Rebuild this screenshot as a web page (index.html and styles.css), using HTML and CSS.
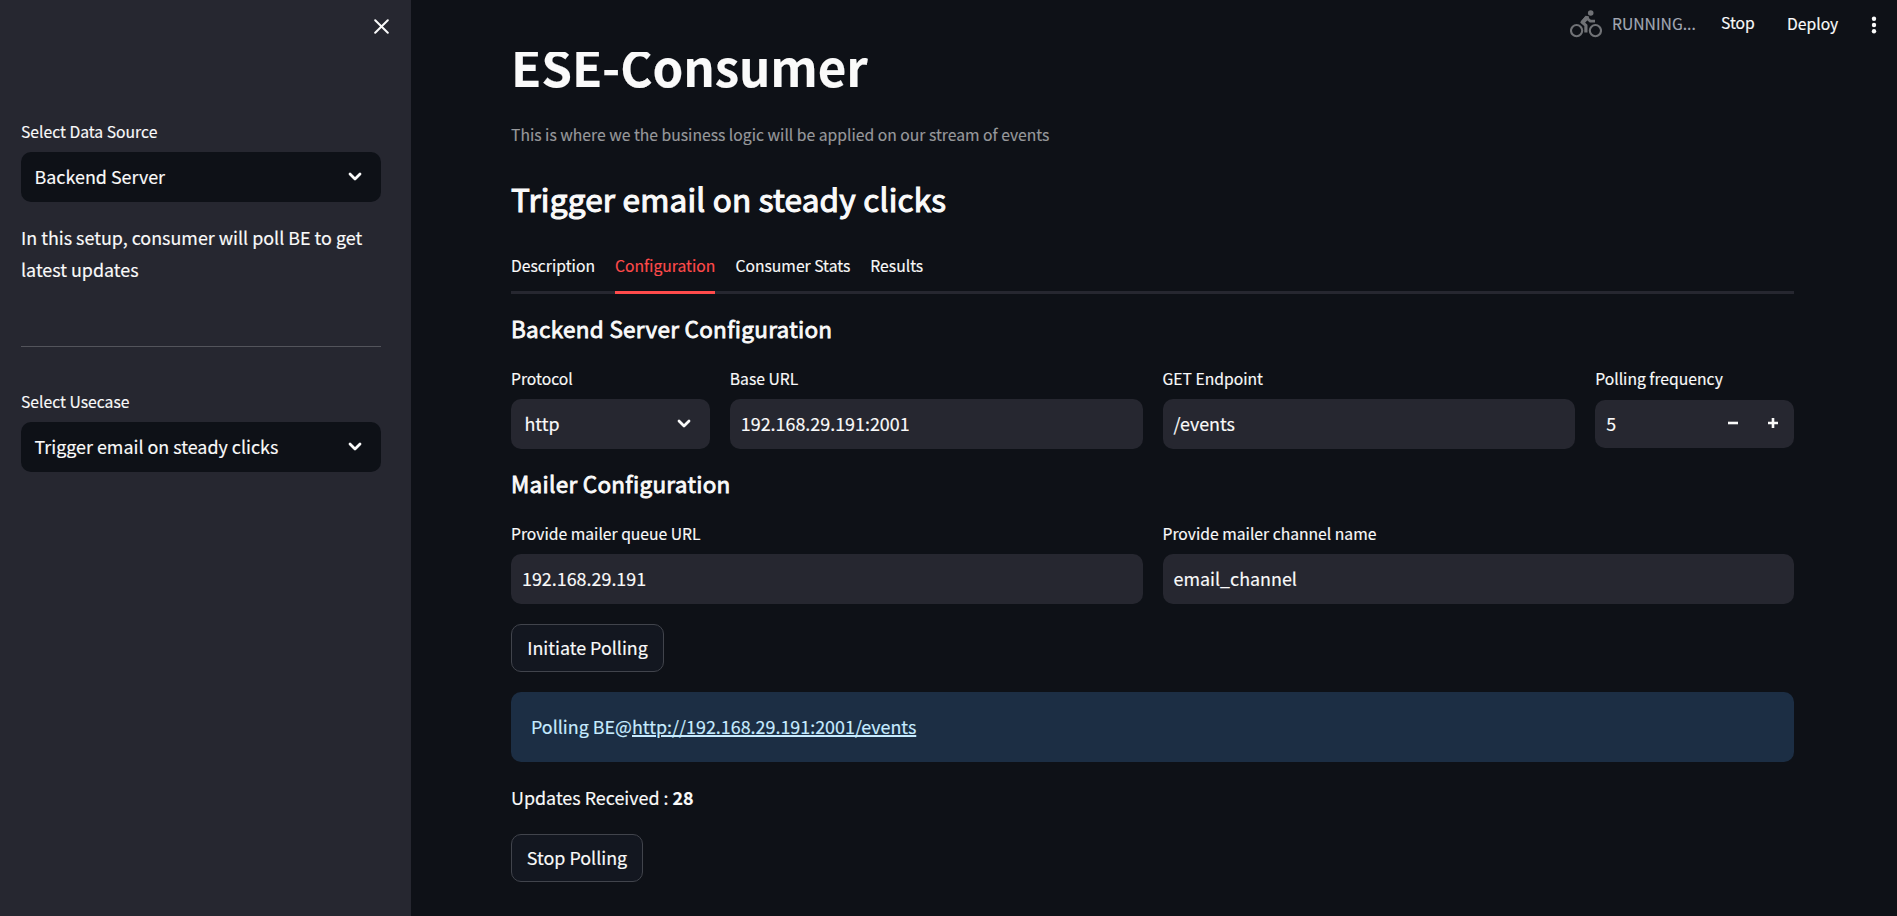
FILE: index.html
```html
<!DOCTYPE html>
<html lang="en">
<head>
<meta charset="utf-8">
<title>ESE-Consumer</title>
<link rel="stylesheet" href="styles.css">
</head>
<body>
<div class="app">
  <aside class="sidebar">
    <button class="close" aria-label="Close sidebar"><svg width="15" height="15" viewBox="0 0 15 15"><path d="M1.2 1.2 13.8 13.8M13.8 1.2 1.2 13.8"/></svg></button>
    <div class="label">Select Data Source</div>
    <div class="field select dark"><span>Backend Server</span><svg class="chev" width="14" height="9" viewBox="0 0 14 9"><path d="M2 2 7 7 12 2"/></svg></div>
    <p class="note">In this setup, consumer will poll BE to get latest updates</p>
    <hr class="divider">
    <div class="label">Select Usecase</div>
    <div class="field select dark"><span>Trigger email on steady clicks</span><svg class="chev" width="14" height="9" viewBox="0 0 14 9"><path d="M2 2 7 7 12 2"/></svg></div>
  </aside>
  <div class="main">
    <header class="toolbar">
      <svg class="bike" width="32" height="28" viewBox="0 0 32 28"><g fill="none" stroke="currentColor"><circle cx="6.6" cy="20.6" r="5.6" stroke-width="2.1"/><circle cx="25.4" cy="20.6" r="5.6" stroke-width="2.1"/><path d="M16.4 7.6 12.2 12.2 15.9 15.4V22.6" stroke-width="3.2" stroke-linejoin="round"/><path d="M16 7.2 20.4 11.2H25" stroke-width="2.8" stroke-linejoin="round"/></g><path d="M10.2 12.6 15.5 5.8 18.8 6.2 19 8.6 14.6 13.2Z" fill="currentColor"/><circle cx="20.7" cy="3" r="2.8" fill="currentColor"/></svg>
      <span class="running">RUNNING...</span>
      <span class="stop">Stop</span>
      <span class="deploy">Deploy</span>
      <svg class="dots" width="6" height="18" viewBox="0 0 6 18"><circle cx="3" cy="2.8" r="2.2"/><circle cx="3" cy="9" r="2.2"/><circle cx="3" cy="15.2" r="2.2"/></svg>
    </header>
    <main class="content">
      <h1 class="title">ESE-Consumer</h1>
      <p class="caption">This is where we the business logic will be applied on our stream of events</p>
      <h2 class="subtitle">Trigger email on steady clicks</h2>
      <nav class="tabs"><span class="tab">Description</span><span class="tab active">Configuration</span><span class="tab">Consumer Stats</span><span class="tab">Results</span></nav>
      <h3 class="section">Backend Server Configuration</h3>
      <div class="row four">
        <div><div class="label">Protocol</div><div class="field select"><span>http</span><svg class="chev" width="14" height="9" viewBox="0 0 14 9"><path d="M2 2 7 7 12 2"/></svg></div></div>
        <div><div class="label">Base URL</div><div class="field">192.168.29.191:2001</div></div>
        <div><div class="label">GET Endpoint</div><div class="field">/events</div></div>
        <div><div class="label">Polling frequency</div><div class="field number"><span>5</span><svg class="step" width="10" height="12" viewBox="0 0 10 12"><path d="M0 6H10"/></svg><svg class="step" width="10" height="12" viewBox="0 0 10 12"><path d="M0 6H10M5 1V11"/></svg></div></div>
      </div>
      <h3 class="section">Mailer Configuration</h3>
      <div class="row two">
        <div><div class="label">Provide mailer queue URL</div><div class="field">192.168.29.191</div></div>
        <div><div class="label">Provide mailer channel name</div><div class="field">email_channel</div></div>
      </div>
      <button class="btn initiate">Initiate Polling</button>
      <div class="alert">Polling BE@<a>http://192.168.29.191:2001/events</a></div>
      <p class="updates">Updates Received : <strong>28</strong></p>
      <button class="btn halt">Stop Polling</button>
    </main>
  </div>
</div>
</body>
</html>
```
FILE: styles.css
```css
* { box-sizing: border-box; margin: 0; padding: 0; }
body {
  background: #0e1117;
  color: #fafafa;
  font-family: "Noto Sans CJK SC", "Noto Sans", sans-serif;
  font-size: 17.9px;
  line-height: 32px;
  -webkit-text-stroke: 0.15px currentColor;
  overflow: hidden;
}
.app { display: flex; height: 916px; }
.sidebar { width: 411px; flex: none; background: #262730; padding: 14px 30px 0 21px; }
.close { display: flex; align-items: center; justify-content: center; margin-left: auto; width: 25px; height: 25px; margin-right: -13px; background: none; border: 0; margin-bottom: 80px; }
.close svg { stroke: #fafafa; stroke-width: 2; stroke-linecap: round; fill: none; }
.label { font-size: 15.7px; line-height: 26px; height: 33px; white-space: nowrap; }
.field { height: 50px; border-radius: 10px; background: #262730; padding: 0 11px 2px; display: flex; align-items: center; white-space: nowrap; }
.select { padding: 0 19px 2px 13.5px; justify-content: space-between; }
.dark { background: #0e1117; }
.chev { fill: none; stroke: #fafafa; stroke-width: 2.8; stroke-linecap: round; stroke-linejoin: round; margin-top: 1px; }
.note { margin-top: 19px; height: 65px; }
.divider { border: 0; height: 1px; background: #53545b; margin: 60px 0 42px; }
.main { flex: 1; position: relative; }
.toolbar { position: absolute; top: 0; left: 0; right: 0; height: 52px; background: #0e1117; display: flex; align-items: flex-start; font-size: 15.7px; line-height: 24px; padding: 12px 20px 0 1159px; }
.bike { color: #707276; margin: -2px 10px 0 0; flex: none; }
.running { color: #a3a8b4; width: 109px; flex: none; }
.stop { width: 66px; flex: none; margin-top: -1px; }
.deploy { width: 83.5px; flex: none; }
.dots { fill: #fafafa; margin-top: 4px; flex: none; }
.content { padding: 33px 103px 0 100px; }
.title { font-size: 49.3px; font-weight: 700; line-height: 66px; letter-spacing: -0.1px; white-space: nowrap; }
.caption { margin-top: 23px; font-size: 15.7px; line-height: 26px; color: #98999c; white-space: nowrap; }
.subtitle { margin-top: 29px; font-size: 31.5px; line-height: 42px; font-weight: 400; letter-spacing: 0.2px; -webkit-text-stroke: 1.1px #fafafa; white-space: nowrap; }
.tabs { margin-top: 22px; height: 53px; display: flex; gap: 20px; border-bottom: 3px solid #262730; font-size: 15.7px; line-height: 50px; }
.tab { height: 53px; white-space: nowrap; }
.active { color: #ff4b4b; border-bottom: 3px solid #ff4b4b; }
.section { margin: 18px 0 22px; font-size: 22.5px; line-height: 32px; font-weight: 400; letter-spacing: 0.29px; -webkit-text-stroke: 0.8px #fafafa; }
.row { display: grid; gap: 20px; }
.four { grid-template-columns: 198.8fr 412.7fr 412.7fr 198.8fr; }
.two { grid-template-columns: 1fr 1fr; }
.number { height: 48px; margin-top: 1px; padding-right: 16px; }
.number span { flex: 1; }
.step { stroke: #fafafa; stroke-width: 2.6; margin-left: 30px; }
.btn { display: block; height: 48px; padding-bottom: 2px; border: 1px solid #41444c; border-radius: 10px; background: #131720; color: #fafafa; font: inherit; text-align: center; white-space: nowrap; }
.initiate { width: 153px; margin-top: 20px; }
.halt { width: 132px; margin-top: 20px; }
.alert { margin-top: 20px; height: 70px; border-radius: 10px; background: #1c2e44; color: #c7ebff; padding: 18px 20px; }
.alert a { text-decoration: underline; text-decoration-thickness: 2px; }
.updates { margin-top: 19px; height: 33px; }
```
